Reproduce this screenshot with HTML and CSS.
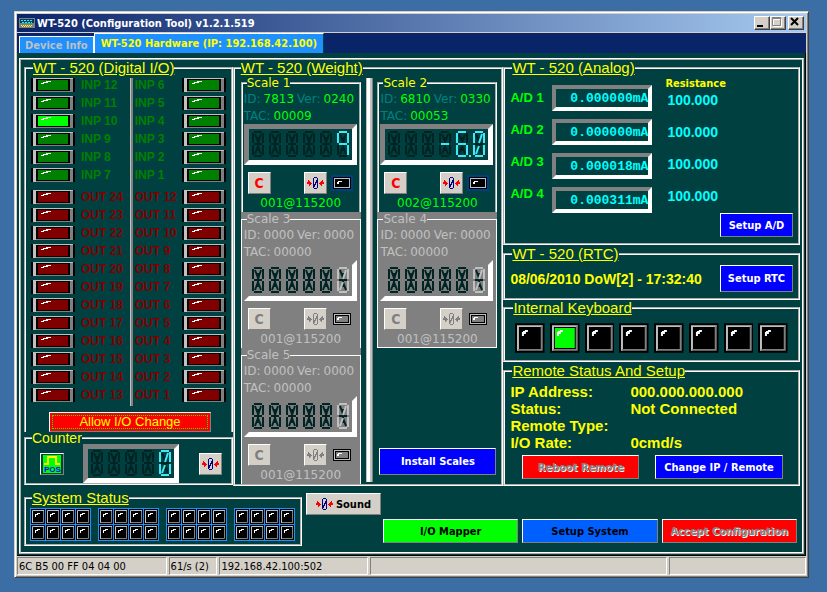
FILE: index.html
```html
<!DOCTYPE html>
<html lang="en">
<head>
    <meta charset="UTF-8">
    <meta name="viewport" content="width=device-width, initial-scale=1.0">
    <title>WT-520 (Configuration Tool) v1.2.1.519</title>
    <link rel="stylesheet" href="styles.css">
</head>
<body>
    <svg class="defs" aria-hidden="true">
        <symbol id="lamp" viewBox="0 0 44 14">
            <path fill="#000" d="M0 0h44v14H0z"/>
            <path fill="#c0c0c0" d="M2 0h40v1H2zM2 0h3v14H2z"/>
            <path fill="#808080" d="M39 1h3v13h-3zM5 13h37v1H5z"/>
            <path fill="currentColor" d="M7 2h30v10H7z"/>
            <path fill="#fff" d="M10 5h3v1h-3zM12 4h5v1h-5zM15 3h5v1h-5z"/>
        </symbol>
        <symbol id="key" viewBox="0 0 30 30">
            <path fill="#000" d="M0 0h30v30H0z"/>
            <path fill="#c0c0c0" d="M2 2h26v2H2zM2 2h2v26H2z"/>
            <path fill="#808080" d="M26 3h2v25h-2zM3 26h25v2H3z"/>
            <path fill="currentColor" d="M5 5h20v20H5z"/>
            <path fill="#fff" d="M7 11h2v2H7zM7 9h4v2H7zM8 8h5v1H8zM10 7h3v1h-3z"/>
        </symbol>
        <symbol id="dot" viewBox="0 0 14 15">
            <path fill="#000" d="M0 0h14v15H0z"/>
            <path fill="none" stroke="#c0c0c0" d="M13 1.500H1.500V14"/>
            <path fill="none" stroke="#808080" d="M12.500 2v11.500H2"/>
            <path fill="#fff" d="M4 5h1v3H4zM5 5h2v1H5zM6 4h3v1H6z"/>
        </symbol>
        <symbol id="led" viewBox="0 0 22 16">
            <path fill="var(--rim)" d="M0 0h22v16H0z"/>
            <path fill="#000" d="M2 2h18v12H2z"/>
            <path fill="#c0c0c0" d="M3 3h16v10H3z"/>
            <path fill="#000" d="M4 4h14v8H4z"/>
            <path fill="currentColor" d="M5 5h12v6H5z"/>
            <path fill="#fff" d="M6 7h2v2H6zM7 6h4v1H7z"/>
        </symbol>
        <symbol id="zero" viewBox="0 0 17 12">
            <path fill="var(--arrow)" d="M0 5h1V3h1v1h1v1h1v1h1v1H4v1H3v1H2V7H0zM17 5h-1V3h-1v1h-1v1h-1v1h-1v1h1v1h1v1h1V7h2z"/>
            <path fill="var(--digit)" d="M7 0h3v1H7zM7 11h3v1H7zM6 1h1v10H6zM10 1h1v10h-1zM9 3h1v3H9zM8 5h1v3H8zM7 7h1v3H7z"/>
        </symbol>
    </svg>

    <div class="window">
        <header class="titlebar">
            <svg class="app-icon" viewBox="0 0 16 12" aria-hidden="true">
                <path fill="#808080" d="M0 1h16v10H0z"/>
                <path fill="#004060" d="M1 2h14v4H1z"/>
                <path stroke="#00ffff" stroke-dasharray="2 1" d="M2 3.500h12M3 5.500h10"/>
                <path stroke="#ffff00" stroke-dasharray="1 1" d="M2 8.500h12M3 9.500h10"/>
            </svg>
            <h1>WT-520 (Configuration Tool) v1.2.1.519</h1>
            <button class="cap" aria-label="Minimize"><svg viewBox="0 0 12 10"><path fill="#000" d="M2 8h6v2H2z"/></svg></button>
            <button class="cap" aria-label="Maximize"><svg viewBox="0 0 12 10"><path fill="none" stroke="#fff" d="M2.500 2.500h8v7h-8z"/><path fill="none" stroke="#808080" d="M1.500 1.500h8v7h-8zM1 .5h9"/></svg></button>
            <button class="cap close" aria-label="Close"><svg viewBox="0 0 12 10"><path stroke="#000" stroke-width="2" d="M2 1l7 7M9 1L2 8"/></svg></button>
        </header>

        <nav class="tabs">
            <button class="tab">Device Info</button>
            <button class="tab active">WT-520 Hardware (IP: 192.168.42.100)</button>
        </nav>

        <main class="page">
            <div class="frame">
                <div class="columns">
                    <section class="column">
                        <fieldset class="group digital">
                            <legend>WT - 520 (Digital I/O)</legend>
                            <div class="io">
                                <div class="bank" id="bankLeft"></div>
                                <div class="io-divider"></div>
                                <div class="bank right" id="bankRight"></div>
                            </div>
                            <button class="btn allow">Allow I/O Change</button>
                        </fieldset>
                        <fieldset class="group counter">
                            <legend>Counter</legend>
                            <button class="pos" aria-label="Positive edge">
                                <svg viewBox="0 0 18 18">
                                    <path fill="#00ff00" d="M0 0h18v18H0z"/>
                                    <path fill="none" stroke="#ffff00" stroke-width="2" d="M1 9h4V2h8v7h4"/>
                                    <text x="1" y="17">POS</text>
                                </svg>
                            </button>
                            <div class="readout"></div>
                            <button class="tool" aria-label="Zero counter"><svg class="zero"><use href="#zero"/></svg></button>
                        </fieldset>
                    </section>

                    <fieldset class="group weight">
                        <legend>WT - 520 (Weight)</legend>
                        <div class="scales" id="scalesLeft"></div>
                        <div class="splitter"></div>
                        <div class="scales" id="scalesRight">
                            <button class="btn blue install">Install Scales</button>
                        </div>
                    </fieldset>

                    <section class="column">
                        <fieldset class="group analog">
                            <legend>WT - 520 (Analog)</legend>
                            <div class="channels">
                                <div class="names">
                                    <label for="ad1">A/D 1</label>
                                    <label for="ad2">A/D 2</label>
                                    <label for="ad3">A/D 3</label>
                                    <label for="ad4">A/D 4</label>
                                </div>
                                <div class="inputs">
                                    <input id="ad1" value="0.000000mA" readonly>
                                    <input id="ad2" value="0.000000mA" readonly>
                                    <input id="ad3" value="0.000018mA" readonly>
                                    <input id="ad4" value="0.000311mA" readonly>
                                </div>
                                <div class="resistance">
                                    <h2>Resistance</h2>
                                    <span>100.000</span>
                                    <span>100.000</span>
                                    <span>100.000</span>
                                    <span>100.000</span>
                                </div>
                            </div>
                            <button class="btn blue">Setup A/D</button>
                        </fieldset>

                        <fieldset class="group rtc">
                            <legend>WT - 520 (RTC)</legend>
                            <span class="clock">08/06/2010 DoW[2] - 17:32:40</span>
                            <button class="btn blue">Setup RTC</button>
                        </fieldset>

                        <fieldset class="group keyboard">
                            <legend>Internal Keyboard</legend>
                            <div class="keys" id="keys"></div>
                        </fieldset>

                        <fieldset class="group remote">
                            <legend>Remote Status And Setup</legend>
                            <dl>
                                <dt>IP Address:</dt><dd>000.000.000.000</dd>
                                <dt>Status:</dt><dd>Not Connected</dd>
                                <dt>Remote Type:</dt><dd></dd>
                                <dt>I/O Rate:</dt><dd>0cmd/s</dd>
                            </dl>
                            <div class="remote-actions">
                                <button class="btn red" disabled>Reboot Remote</button>
                                <button class="btn blue">Change IP / Remote</button>
                            </div>
                        </fieldset>
                    </section>
                </div>

                <div class="bottom">
                    <fieldset class="group system">
                        <legend>System Status</legend>
                        <div class="dots" id="dots"></div>
                    </fieldset>
                    <button class="tool sound"><svg class="zero"><use href="#zero"/></svg>Sound</button>
                    <div class="actions">
                        <button class="btn green">I/O Mapper</button>
                        <button class="btn azure">Setup System</button>
                        <button class="btn red" disabled>Accept Configuration</button>
                    </div>
                </div>
            </div>
        </main>

        <footer class="statusbar">
            <span>6C B5 00 FF 04 04 00</span>
            <span>61/s (2)</span>
            <span>192.168.42.100:502</span>
            <span></span>
            <span></span>
        </footer>
    </div>

    <script>
        const segments = {
            a: 'M2 1h8', f: 'M1 2v10', b: 'M11 2v10', g: 'M2 13h8',
            e: 'M1 14v10', c: 'M11 14v10', d: 'M2 25h8',
            h: 'M3 3l3 8', i: 'M6 6v6', j: 'M9 3l-3 9',
            k: 'M3 23l3-8', l: 'M6 14v6', m: 'M9 23l-3-8', p: 'M13 25h2'
        };
        const glyphs = { ' ': '', '-': 'g', '0': 'abcdefjk', '6': 'afgecd', '9': 'afbgc' };

        const scales = [
            { no: 1, id: '7813', ver: '0240', tac: '00009', value: '     9', addr: '001@115200' },
            { no: 2, id: '6810', ver: '0330', tac: '00053', value: '   -6.0', addr: '002@115200' },
            { no: 3, off: true }, { no: 4, off: true }, { no: 5, off: true }
        ];

        function digit(ch, point) {
            const lit = glyphs[ch] + (point ? 'p' : '');
            const draw = (cls, keep) => `<path class="${cls}" d="${Object.keys(segments)
                .filter(keep).map(s => segments[s]).join('')}"/>`;
            return `<svg class="digit" viewBox="0 0 15 27">
                ${draw('dim', s => s !== 'p' && !lit.includes(s))}
                ${draw('lit', s => lit.includes(s))}</svg>`;
        }

        function readout(value) {
            return (value.match(/[^.]\.?/g) || []).map(c => digit(c[0], c.length > 1)).join('');
        }

        function scale(s) {
            return `<div class="slot${s.off ? ' off' : ''}"><fieldset class="scale"${s.off ? ' disabled' : ''}>
                <legend>Scale ${s.no}</legend>
                <p class="info"><span>ID:</span><b>${s.id || '0000'}</b><span>Ver:</span><b>${s.ver || '0000'}</b></p>
                <p class="info"><span>TAC:</span><b>${s.tac || '00000'}</b></p>
                <div class="readout">${readout(s.value || '     0')}</div>
                <div class="tools">
                    <button class="tool clear">C</button>
                    <button class="tool" aria-label="Zero scale ${s.no}"><svg class="zero"><use href="#zero"/></svg></button>
                    <svg class="led"><use href="#led"/></svg>
                </div>
                <p class="addr">${s.addr || '001@115200'}</p>
            </fieldset></div>`;
        }

        function bank(inputs, outputs) {
            const row = (kind, n) => `<div class="line ${kind.toLowerCase()}${kind === 'INP' && n === 10 ? ' on' : ''}">
                <svg class="lamp"><use href="#lamp"/></svg><span>${kind} ${n}</span></div>`;
            let html = '';
            for (let n = inputs; n > inputs - 6; n--) html += row('INP', n);
            for (let n = outputs; n > outputs - 12; n--) html += row('OUT', n);
            return html;
        }

        document.getElementById('bankLeft').innerHTML = bank(12, 24);
        document.getElementById('bankRight').innerHTML = bank(6, 12);
        document.querySelector('.counter .readout').innerHTML = readout('    0');
        document.getElementById('scalesLeft').innerHTML = [0, 2, 4].map(i => scale(scales[i])).join('');
        document.getElementById('scalesRight').insertAdjacentHTML('afterbegin', [1, 3].map(i => scale(scales[i])).join(''));

        for (let i = 0; i < 8; i++) {
            document.getElementById('keys').innerHTML += `<svg class="key${i === 1 ? ' on' : ''}"><use href="#key"/></svg>`;
        }
        for (let i = 0; i < 4; i++) {
            document.getElementById('dots').innerHTML +=
                `<div class="dot-group">${'<svg class="dot"><use href="#dot"/></svg>'.repeat(8)}</div>`;
        }
    </script>
</body>
</html>
```
FILE: styles.css
```css
:root {
    --desktop: #3a6ea5;
    --face: #d4d0c8;
    --navy: #0a246a;
    --teal: #004040;
    --yellow: #ffff00;
    --lime: #00ff00;
    --ui: "DejaVu Sans Condensed", "DejaVu Sans", sans-serif;
    --label: "Liberation Sans", Arial, sans-serif;
    --arrow: #ff0000;
    --digit: #000080;
}
* {
    box-sizing: border-box;
}
body {
    margin: 0;
    padding: 11px 18px 14px 14px;
    background: var(--desktop);
    font-family: var(--ui);
    font-size: 11px;
}
h1, h2, p, dl, dd {
    margin: 0;
}
button {
    font-family: var(--ui);
    font-size: 11px;
    font-weight: bold;
    padding: 0;
    white-space: nowrap;
}
.defs {
    position: absolute;
    width: 0;
    height: 0;
}
.window {
    background: var(--face);
    border: 1px solid;
    border-color: var(--face) #404040 #404040 var(--face);
    box-shadow: inset 1px 1px #fff, inset -1px -1px #808080;
    padding: 2px;
}

/* title bar */
.titlebar {
    display: flex;
    align-items: center;
    height: 18px;
    padding: 0 2px;
    background: linear-gradient(to right, var(--navy), #a6caf0);
}
.app-icon {
    width: 16px;
    height: 12px;
    margin-right: 2px;
}
.titlebar h1 {
    flex: 1;
    color: #fff;
    font-size: 11px;
}
.cap {
    display: flex;
    width: 16px;
    height: 14px;
    background: var(--face);
    border: 1px solid;
    border-color: #fff #404040 #404040 #fff;
    box-shadow: inset -1px -1px #808080;
}
.cap svg {
    width: 12px;
    height: 10px;
}
.cap.close {
    margin-left: 2px;
}

/* tabs */
.tabs {
    display: flex;
    align-items: flex-end;
    height: 20px;
    margin-top: 1px;
    padding-left: 2px;
    background: var(--navy);
}
.tab {
    height: 17px;
    padding: 0 5px;
    background: #1e90ff;
    color: #c0c0c0;
    border: 1px solid #fff;
    border-bottom: 0;
}
.tab.active {
    height: 20px;
    padding: 0 6px;
    color: var(--yellow);
    border-color: #fff #004040 #004040 #fff;
}

/* page */
.page {
    padding: 5px 1px 1px 2px;
    background: var(--teal);
    border-bottom: 1px solid #000;
    border-right: 1px solid #000;
}
.frame {
    padding: 0 2px 6px 3px;
    border: 2px ridge #fff;
}
.columns {
    display: grid;
    grid-template-columns: 209fr 271fr 297fr;
}
.column {
    min-width: 0;
}
.group {
    min-width: 0;
    margin: 0;
    padding: 0 6px;
    border: 2px groove #fff;
}
.group > legend {
    padding: 0;
    color: var(--yellow);
    font-family: var(--label);
    font-size: 15px;
    line-height: 16px;
    text-decoration: underline;
}
.column .group > legend, .system > legend {
    margin-left: 2px;
}

/* digital I/O */
.digital {
    padding: 2px 5px 0;
    border-bottom: 0;
}
.io {
    display: flex;
    justify-content: space-between;
}
.io-divider {
    width: 3px;
    background: linear-gradient(to right, #c0c0c0 1px, #808080 1px);
}
.bank {
    width: 97px;
}
.bank.right {
    width: 91px;
}
.line {
    display: flex;
    align-items: flex-start;
    gap: 6px;
    height: 18px;
    font: bold 12px/14px var(--label);
    white-space: nowrap;
}
.bank.right .line {
    flex-direction: row-reverse;
    justify-content: space-between;
    gap: 0;
}
.inp + .out {
    margin-top: 4px;
}
.lamp {
    flex: none;
    width: 44px;
    height: 14px;
}
.inp {
    color: #008000;
}
.out {
    color: #800000;
}
.inp.on .lamp {
    color: var(--lime);
}
.btn {
    height: 24px;
    border: 1px solid;
    border-color: #fff #808080 #808080 #fff;
    color: #fff;
}
.allow {
    display: block;
    width: 162px;
    height: 20px;
    margin: 6px auto 0 18px;
    background: #f00;
    color: var(--yellow);
    font: 13px/14px var(--label);
    outline: 1px dotted var(--lime);
    outline-offset: -4px;
}

/* counter */
.counter {
    display: flex;
    align-items: center;
    justify-content: space-between;
    padding: 0 9px 0 14px;
}
.column .counter > legend {
    margin-left: -8px;
    font-size: 14px;
    line-height: 12px;
    text-decoration: none;
}
.counter .readout {
    padding: 1px 0 1px 3px;
}
.pos {
    display: grid;
    place-items: center;
    width: 24px;
    height: 22px;
    background: var(--teal);
    border: 1px solid;
    border-color: #fff #808080 #808080 #fff;
}
.pos svg {
    width: 18px;
    height: 18px;
}
.pos text {
    fill: #0000ff;
    font: bold 8px var(--label);
}

/* segment readouts */
.readout {
    display: flex;
    gap: 2px;
    width: fit-content;
    padding: 2px 0 2px 3px;
    border: 5px solid;
    border-color: #808080 #fff #fff #808080;
}
.digit {
    width: 15px;
    height: 27px;
}
.digit path {
    fill: none;
    stroke-width: 2;
}
.dim {
    stroke: #002424;
}
.lit {
    stroke: #40e8f8;
}
.tool {
    display: grid;
    place-items: center;
    width: 23px;
    height: 22px;
    background: var(--face);
    border: 1px solid;
    border-color: #fff #808080 #808080 #fff;
    color: #000;
}
.zero {
    width: 17px;
    height: 12px;
}
.clear {
    color: #f00;
    font-size: 14px;
}

/* scales */
.weight {
    display: flex;
    justify-content: space-between;
    padding-right: 4px;
}
.scales {
    display: flex;
    flex-direction: column;
    width: 120px;
}
.splitter {
    width: 7px;
    margin: 2px 0;
    background: linear-gradient(to right, #c0c0c0 1px, #fff 1px, #fff 4px, #c0c0c0 4px, #c0c0c0 6px, #808080 6px);
}
.slot {
    --rim: #004080;
}
.scale {
    min-width: 0;
    height: 136px;
    margin: 0;
    padding: 0 1px;
    border: 2px groove #fff;
    border-bottom: 0;
    color: var(--lime);
    font-size: 12px;
    font-family: "DejaVu Sans", sans-serif;
}
.scale legend {
    margin-left: 3px;
    padding: 0;
    color: var(--yellow);
    font-size: 12px;
    line-height: 14px;
}
.info {
    display: flex;
    gap: 3px;
    height: 17px;
    line-height: 18px;
}
.info span {
    color: #008080;
}
.info b {
    font-weight: normal;
}
.tools {
    display: grid;
    grid-template-columns: 1fr auto auto;
    align-items: center;
    gap: 4px;
    padding: 7px 5px 0 4px;
}
.led {
    width: 22px;
    height: 16px;
    color: #000;
}
.addr {
    padding-top: 2px;
    line-height: 14px;
    text-align: center;
}
.off {
    background: #808080;
    --rim: #808080;
    --arrow: #808080;
    --digit: #808080;
}
.off .scale {
    padding: 0 2px;
    border: 1px solid #fff;
    border-bottom: 0;
    color: #c0c0c0;
}
#scalesRight .off .scale {
    border-bottom: 1px solid #fff;
}
.off legend, .off .info span {
    color: #c0c0c0;
}
.off .lit {
    stroke: #c0c0c0;
}
.off .clear, .off .led {
    color: #808080;
}
.install {
    width: 117px;
    height: 27px;
    margin: auto 0 9px 2px;
}
.blue {
    background: #00f;
}
.red {
    background: #f00;
}
.green {
    background: var(--lime);
    color: #000;
}
.azure {
    background: #0060ff;
    color: #000;
}
.red:disabled {
    color: #808080;
    text-shadow: 1px 1px #fff;
}

/* analog */
.analog {
    padding: 0 5px 6px;
}
.channels {
    display: flex;
    align-items: flex-start;
}
.names {
    width: 42px;
    padding-top: 6px;
    color: var(--lime);
    font: bold 13px/32px var(--label);
}
.names label {
    display: block;
}
.inputs {
    display: grid;
    gap: 8px;
    width: 100px;
    padding-top: 9px;
}
.inputs input {
    width: 100%;
    height: 26px;
    padding: 0;
    background: var(--teal);
    border: 4px solid;
    border-color: #808080 #fff #fff #808080;
    color: #0ff;
    font: bold 13px/18px "Liberation Mono", monospace;
    text-align: right;
}
.resistance {
    display: grid;
    margin-left: 13px;
}
.resistance h2 {
    color: var(--yellow);
    font-size: 11px;
    line-height: 16px;
}
.resistance span {
    padding-left: 2px;
    color: #0ff;
    font: bold 14px/16px var(--label);
}
.resistance span + span {
    padding-top: 16px;
}
.analog .btn, .rtc .btn {
    display: block;
    width: 73px;
    margin-left: auto;
}

/* RTC */
.rtc {
    display: flex;
    align-items: center;
    margin-top: 1px;
    padding: 3px 5px 6px;
}
.clock {
    color: var(--yellow);
    font: bold 14px/16px var(--label);
}
.rtc .btn {
    height: 27px;
}

/* keyboard */
.keys {
    display: flex;
    gap: 5px;
    padding: 7px 4px;
}
.key {
    width: 30px;
    height: 30px;
    color: #000;
}
.key.on {
    color: var(--lime);
}

/* remote */
.remote {
    margin-top: 1px;
    padding: 4px 5px 5px;
}
.remote dl {
    display: grid;
    grid-template-columns: 120px 1fr;
    color: var(--yellow);
    font: bold 15px/17px var(--label);
}
.remote-actions {
    display: flex;
    justify-content: space-between;
    padding: 4px 10px 0 12px;
}
.remote-actions .red {
    width: 117px;
}
.remote-actions .blue {
    width: 128px;
}

/* bottom strip */
.bottom {
    display: flex;
    margin-top: 4px;
}
.system {
    width: 278px;
    padding: 2px 4px 3px;
}
.dots {
    display: flex;
    gap: 7px;
}
.dot-group {
    display: grid;
    grid-template-columns: repeat(4, 14px);
    gap: 1px;
    padding: 1px;
    background: #1e90ff;
}
.dot {
    width: 14px;
    height: 15px;
}
.sound {
    display: flex;
    align-items: center;
    justify-content: center;
    gap: 3px;
    width: 75px;
    margin: 3px 0 0 4px;
}
.actions {
    display: grid;
    flex: 1;
    grid-template-columns: repeat(3, 1fr);
    gap: 4px;
    align-self: end;
    margin: 0 3px 3px 2px;
}

/* status bar */
.statusbar {
    display: grid;
    grid-template-columns: 150fr 49fr 149fr 298fr 137fr;
    gap: 2px;
    padding-top: 1px;
}
.statusbar span {
    height: 18px;
    padding-left: 1px;
    border: 1px solid;
    border-color: #808080 #fff #fff #808080;
    line-height: 17px;
    white-space: nowrap;
}
```
